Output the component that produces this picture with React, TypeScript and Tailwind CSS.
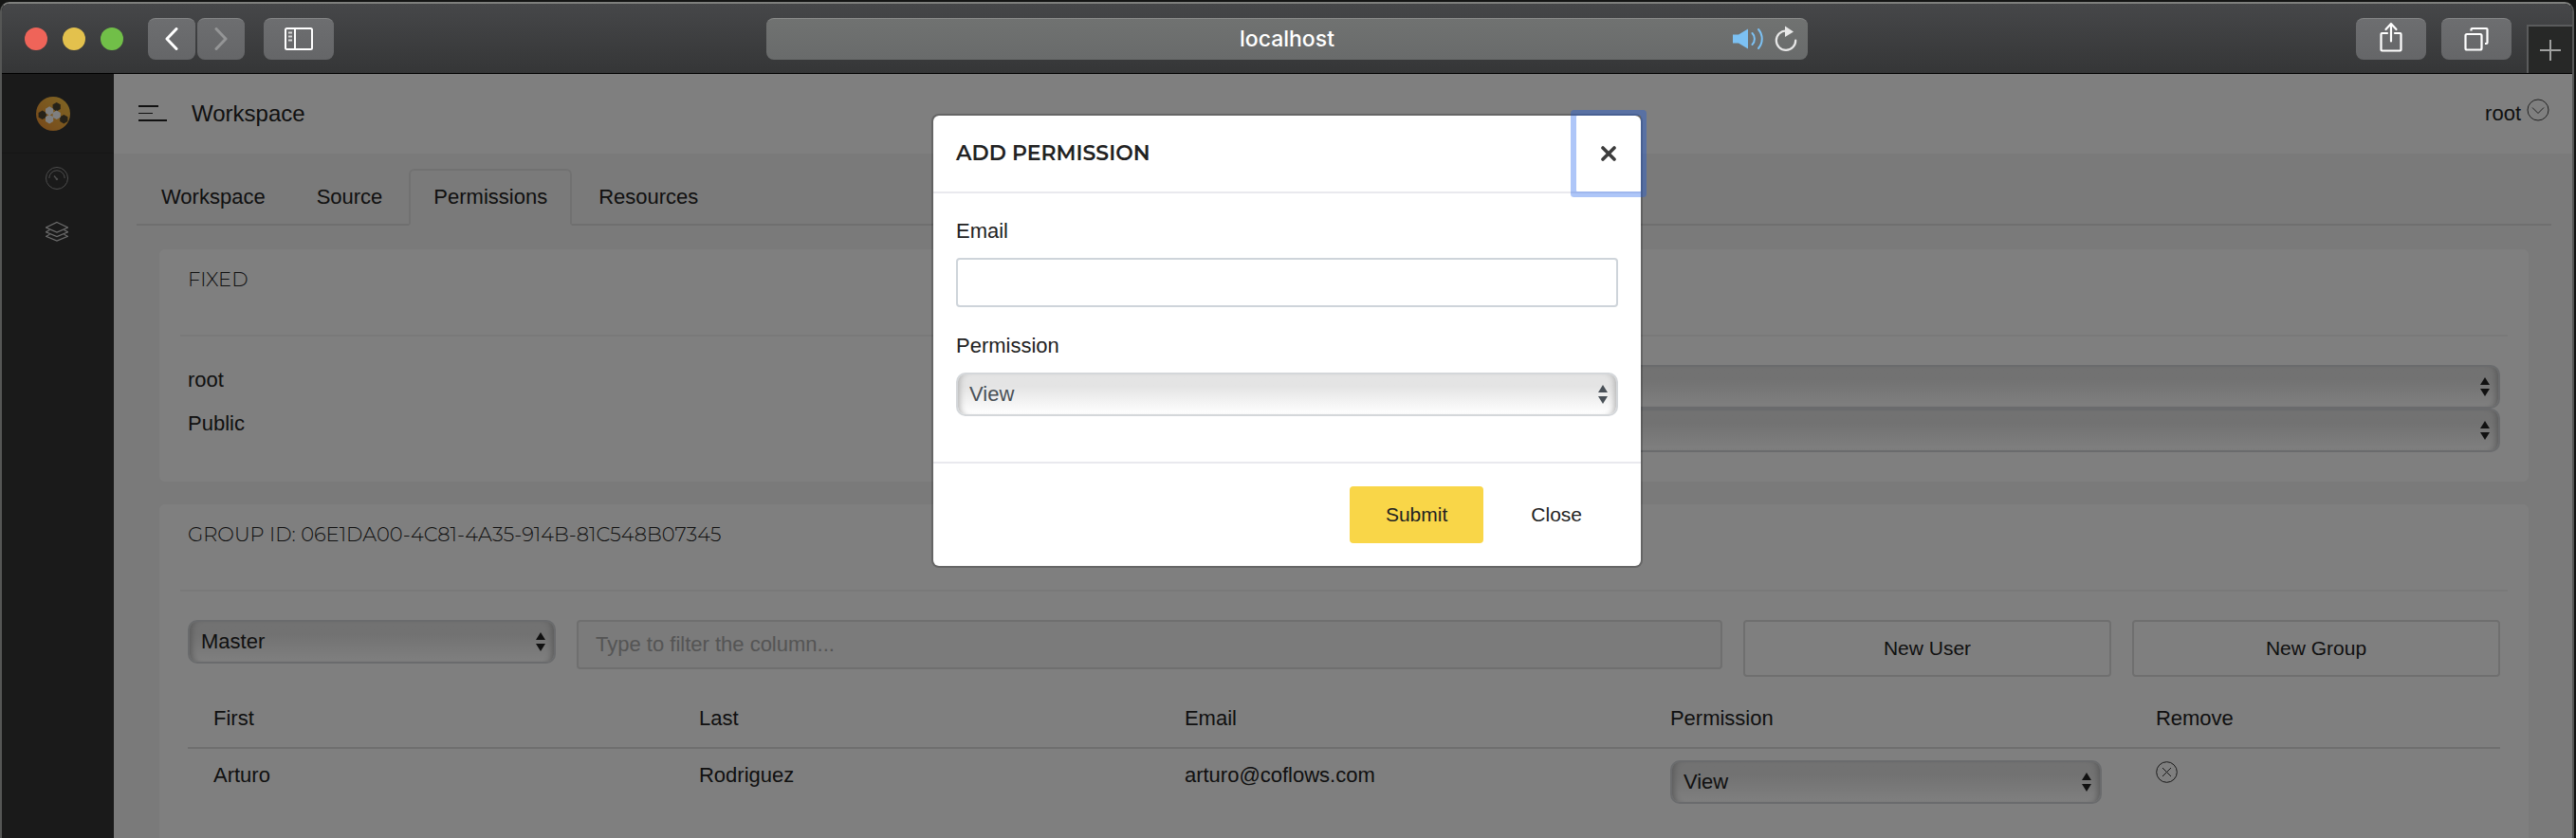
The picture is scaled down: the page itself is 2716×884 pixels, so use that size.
import React from "react";

const toolButton =
  "flex h-11 items-center justify-center rounded-lg border-t border-[#858687] bg-linear-to-b from-[#6d6e70] to-[#656668] text-white";

function SortArrows() {
  return (
    <svg className="pointer-events-none absolute right-2.5 top-3" width="12" height="22" viewBox="0 0 12 22" fill="currentColor">
      <path d="M6 1 11 9H1Z" />
      <path d="M6 21 11 13H1Z" />
    </svg>
  );
}

type PickerProps = {
  id?: string;
  label?: string;
  options: string[];
  className?: string;
};

function Picker({ id, label, options, className = "text-[#222]" }: PickerProps) {
  return (
    <div className={`relative h-[46px] w-full ${className}`}>
      <select
        id={id}
        aria-label={label}
        className="h-full w-full appearance-none rounded-[10px] border-2 border-[#d4d7da] bg-linear-to-b from-[#e4e4e4] from-30% to-white px-3 text-[22px] leading-6 shadow-[inset_7px_0_6px_-5px_#b4b4b4,inset_-7px_0_6px_-5px_#b4b4b4] outline-none"
      >
        {options.map((option) => (
          <option key={option}>{option}</option>
        ))}
      </select>
      <SortArrows />
    </div>
  );
}

function BrowserBar() {
  return (
    <header className="grid h-[74px] grid-cols-[1fr_40.5%_1fr] items-center rounded-t-lg border-b border-black bg-linear-to-b from-[#464749] to-[#353637]">
      <div className="flex items-center pl-6">
        <div className="flex gap-4">
          <span className="size-6 rounded-full bg-[#ef6459]" />
          <span className="size-6 rounded-full bg-[#e3c14d]" />
          <span className="size-6 rounded-full bg-[#71bf48]" />
        </div>
        <button aria-label="Back" className={`${toolButton} ml-[26px] w-[50px]`}>
          <svg width="16" height="24" viewBox="0 0 16 24" fill="none" stroke="currentColor" strokeWidth="3" strokeLinecap="round" strokeLinejoin="round">
            <path d="M13 1.500 3 12l10 10.500" />
          </svg>
        </button>
        <button aria-label="Forward" className={`${toolButton} ml-[2px] w-[50px]`}>
          <svg width="16" height="24" viewBox="0 0 16 24" fill="none" stroke="#949596" strokeWidth="3" strokeLinecap="round" strokeLinejoin="round">
            <path d="M3 1.500 13 12 3 22.500" />
          </svg>
        </button>
        <button aria-label="Show sidebar" className={`${toolButton} ml-5 w-[74px]`}>
          <svg width="30" height="24" viewBox="0 0 30 24" fill="none" stroke="currentColor" strokeWidth="2">
            <rect x="1" y="1" width="28" height="22" rx="1.500" />
            <path d="M11 1v22" />
            <path d="M4 5.500h4M4 9.500h4M4 13.500h4" stroke="#d6d6d6" />
          </svg>
        </button>
      </div>

      <div className="grid h-11 grid-cols-[1fr_auto_1fr] items-center rounded-lg border-t border-[#8b8c8b] bg-linear-to-b from-[#707271] to-[#696b6b] px-2.5">
        <span />
        <span className="font-['Inter',sans-serif] text-[23px] font-medium leading-7 text-white">localhost</span>
        <div className="flex items-center justify-end gap-2.5">
          <button aria-label="Mute tab">
            <svg width="34" height="24" viewBox="0 0 34 24" fill="none" stroke="#7cc1f3" strokeWidth="2" strokeLinecap="round">
              <path d="M1 7.500h6L17 1.500v21L7 16.500H1Z" fill="#7cc1f3" stroke="none" />
              <path d="M21.500 6c3.200 3 3.200 9 0 12M28 2c5 6 5 14 0 20" />
            </svg>
          </button>
          <button aria-label="Reload">
            <svg width="26" height="28" viewBox="0 0 26 28" fill="none" stroke="#e8e8e8" strokeWidth="2.200" strokeLinecap="round">
              <path d="M13 5.500A10.200 10.200 0 1 0 23.200 15.500" />
              <path d="M12 0.500 21 6.500 12 12Z" fill="#e8e8e8" stroke="none" />
            </svg>
          </button>
        </div>
      </div>

      <div className="flex h-full items-center justify-end gap-4">
        <button aria-label="Share" className={`${toolButton} w-[74px]`}>
          <svg className="mb-1" width="24" height="32" viewBox="0 0 24 32" fill="none" stroke="currentColor" strokeWidth="2.200" strokeLinejoin="round" strokeLinecap="round">
            <path d="M8 12H2.500A1 1 0 0 0 1.500 13v16.500a1 1 0 0 0 1 1h19a1 1 0 0 0 1-1V13a1 1 0 0 0-1-1H16" />
            <path d="M12 20.500V2M6.500 8 12 2l5.500 6" />
          </svg>
        </button>
        <button aria-label="Show all tabs" className={`${toolButton} w-[74px]`}>
          <svg width="26" height="26" viewBox="0 0 26 26" fill="none" stroke="currentColor" strokeWidth="2.200" strokeLinejoin="round">
            <rect x="1.500" y="8" width="17" height="16.500" rx="1.500" />
            <path d="M7.500 4.500V3a1 1 0 0 1 1-1H23.500a1 1 0 0 1 1 1v14a1 1 0 0 1-1 1H22" />
          </svg>
        </button>
        <button aria-label="New tab" className="flex h-[51px] w-12 items-center justify-center self-end border-l-2 border-t-2 border-[#5a5b5c] bg-[#272827]">
          <svg width="22" height="22" viewBox="0 0 22 22" stroke="#a0a1a0" strokeWidth="2">
            <path d="M11 0v22M0 11h22" />
          </svg>
        </button>
      </div>
    </header>
  );
}

function Logo() {
  const hexagon = "M0-4.700 4.100-2.350V2.350L0 4.700-4.100 2.350V-2.350Z";
  return (
    <svg width="36" height="36" viewBox="0 0 36 36">
      <defs>
        <linearGradient id="gold" x1="1" y1="0" x2="0" y2="1">
          <stop offset="0" stopColor="#ffcc48" />
          <stop offset="1" stopColor="#ee9034" />
        </linearGradient>
      </defs>
      <circle cx="18" cy="18" r="18" fill="url(#gold)" />
      <g fill="#4c4430">
        <path d={hexagon} transform="translate(21.700 10.700)" />
        <path d={hexagon} transform="translate(6.700 19.300)" />
        <path d={hexagon} transform="translate(29.300 23.700)" />
      </g>
      <g fill="#fff">
        <path d={hexagon} transform="translate(14.100 15)" />
        <path d={hexagon} transform="translate(21.700 19.300)" />
        <path d={hexagon} transform="translate(14.100 23.700)" />
      </g>
    </svg>
  );
}

function Sidebar() {
  return (
    <aside className="w-[118px] shrink-0 bg-[#343434]">
      <a href="#home" aria-label="Home" className="flex h-[84px] items-center border-b border-[#2c2c2c] pl-9">
        <Logo />
      </a>
      <nav className="flex flex-col gap-8 pl-[46px] pt-3.5">
        <a href="#dashboard" aria-label="Dashboard">
          <svg width="24" height="24" viewBox="0 0 24 24" fill="none" stroke="#9a9a9a">
            <circle cx="12" cy="12" r="11.500" />
            <path d="M3.800 12a8.200 8.200 0 0 1 16.400 0" />
            <path d="M9 9.500 12 13" strokeWidth="1.500" />
            <circle cx="12" cy="13" r="0.800" fill="#9a9a9a" />
          </svg>
        </a>
        <a href="#workspaces" aria-label="Workspaces">
          <svg width="24" height="24" viewBox="0 0 24 24" fill="none" stroke="#d8d8d8" strokeWidth="1.200">
            <path d="M12 2.500 23.500 8 12 13 0.500 8Z" />
            <path d="M4.500 10.500 0.500 12.700 12 17.500l11.500-4.800-4-2.200" />
            <path d="M4.500 15.200 0.500 17.300 12 22l11.500-4.700-4-2.100" />
          </svg>
        </a>
      </nav>
    </aside>
  );
}

function Card({ title, className = "", children }: { title: string; className?: string; children: React.ReactNode }) {
  return (
    <section className={`rounded-md bg-white px-[22px] pt-5 ${className}`}>
      <h2 className="border-b-2 border-[#f3f3f3] px-2 pb-[46px] font-['Montserrat','Inter',sans-serif] text-[21px] font-light leading-6">{title}</h2>
      <div className="px-2 pt-[30px]">{children}</div>
    </section>
  );
}

const tabs = ["Workspace", "Source", "Permissions", "Resources"];
const columns = ["First", "Last", "Email", "Permission", "Remove"];

function Page() {
  return (
    <div className="flex min-w-0 flex-1 flex-col bg-[#f4f4f4]">
      <div className="flex h-[84px] items-center justify-between bg-white pl-[26px] pr-6">
        <div className="flex items-center gap-[26px]">
          <button aria-label="Toggle menu">
            <svg width="30" height="18" viewBox="0 0 30 18" fill="#222">
              <rect y="0" width="21" height="2" />
              <rect y="8" width="15" height="1" />
              <rect y="15" width="30" height="2" />
            </svg>
          </button>
          <h1 className="text-[24px] leading-8">Workspace</h1>
        </div>
        <button className="flex items-center gap-1.5 text-[22px] leading-8">
          root
          <svg className="mb-2" width="24" height="24" viewBox="0 0 24 24" fill="none" stroke="#444">
            <circle cx="12" cy="12" r="11" />
            <path d="M6 9.500 12 15.500l6-6" />
          </svg>
        </button>
      </div>

      <main className="flex flex-1 flex-col pl-6 pr-[22px] pt-4">
        <div role="tablist" className="flex h-[60px] gap-[2px] border-b-2 border-[#dfdfdf] text-[22px] leading-8">
          {tabs.map((tab) => (
            <button
              key={tab}
              role="tab"
              aria-selected={tab === "Permissions"}
              className="-mb-[2px] rounded-t-md border-2 border-transparent px-6 aria-selected:border-[#e3e3e3] aria-selected:border-b-[#f4f4f4] aria-selected:bg-[#f4f4f4]"
            >
              {tab}
            </button>
          ))}
        </div>

        <div className="flex flex-1 flex-col gap-6 px-6 pt-[25px]">
          <Card title="FIXED" className="pb-[31px]">
            {["root", "Public"].map((name) => (
              <div key={name} className="grid h-[46px] grid-cols-2 items-start">
                <span className="text-[22px] leading-8">{name}</span>
                <Picker label={`${name} permission`} options={["View"]} />
              </div>
            ))}
          </Card>

          <Card title="GROUP ID: 06E1DA00-4C81-4A35-914B-81C548B07345" className="flex-1 rounded-b-none">
            <div className="grid grid-cols-12 items-start gap-x-[22px]">
              <div className="col-span-2">
                <Picker label="Group" options={["Master"]} />
              </div>
              <input
                aria-label="Filter"
                placeholder="Type to filter the column..."
                className="col-span-6 h-[52px] rounded border-2 border-[#dedede] bg-[#f6f6f6] px-[18px] text-[22px] placeholder:text-[#aaa]"
              />
              <button className="col-span-2 h-[60px] rounded border-2 border-[#dedede] text-[21px]">New User</button>
              <button className="col-span-2 h-[60px] rounded border-2 border-[#dedede] text-[21px]">New Group</button>
            </div>

            <table className="mt-3.5 w-full table-fixed text-left text-[22px] leading-8">
              <thead>
                <tr className="border-b-2 border-[#dedede]">
                  {columns.map((column) => (
                    <th key={column} className="w-[21%] py-3.5 pl-[27px] pr-[30px] font-normal last:w-[16%]">
                      {column}
                    </th>
                  ))}
                </tr>
              </thead>
              <tbody>
                <tr className="align-top">
                  <td className="pl-[27px] pr-[30px] pt-3">Arturo</td>
                  <td className="pl-[27px] pr-[30px] pt-3">Rodriguez</td>
                  <td className="pl-[27px] pr-[30px] pt-3">arturo@coflows.com</td>
                  <td className="pl-[27px] pr-[30px] pt-3">
                    <Picker label="Arturo Rodriguez permission" options={["View"]} />
                  </td>
                  <td className="pl-[27px] pr-[30px] pt-3">
                    <button aria-label="Remove Arturo Rodriguez" className="block">
                      <svg width="24" height="24" viewBox="0 0 24 24" fill="none" stroke="#333">
                        <circle cx="11.500" cy="12.500" r="10.800" />
                        <path d="M7 8l9 9M16 8l-9 9" />
                      </svg>
                    </button>
                  </td>
                </tr>
              </tbody>
            </table>
          </Card>
        </div>
      </main>
    </div>
  );
}

function AddPermissionDialog() {
  return (
    <div className="absolute inset-0 flex items-start justify-center bg-black/50 pt-[42px]">
      <form role="dialog" aria-labelledby="dialog-title" className="w-[750px] rounded-lg border-2 border-black/20 bg-white bg-clip-padding">
        <div className="flex h-[82px] items-stretch justify-between border-b-2 border-[#e9e9ee] pl-6">
          <h2 id="dialog-title" className="self-center font-['Montserrat','Inter',sans-serif] text-[22px] font-semibold leading-8">
            ADD PERMISSION
          </h2>
          <button type="button" aria-label="Close dialog" className="flex w-[68px] items-center justify-center rounded-[1px] shadow-[0_0_0_6px_rgba(17,87,235,0.34)]">
            <svg width="16" height="16" viewBox="0 0 16 16" stroke="#3c3c3c" strokeWidth="3.600" strokeLinecap="round">
              <path d="M2 2l12 12M14 2 2 14" />
            </svg>
          </button>
        </div>
        <div className="flex flex-col gap-[29px] px-6 pb-12 pt-7 text-[22px] leading-6">
          <div className="flex flex-col gap-4">
            <label htmlFor="email">Email</label>
            <input id="email" type="email" className="h-[52px] w-full rounded border-2 border-[#ced4da] px-4 outline-none" />
          </div>
          <div className="flex flex-col gap-4">
            <label htmlFor="permission">Permission</label>
            <Picker id="permission" options={["View"]} className="text-[#495057]" />
          </div>
        </div>
        <div className="flex justify-end gap-3 border-t-2 border-[#e9e9ee] p-6 text-[21px]">
          <button type="submit" className="h-[60px] rounded bg-[#f9d648] px-[38px]">Submit</button>
          <button type="button" className="h-[60px] px-[38px]">Close</button>
        </div>
      </form>
    </div>
  );
}

export default function App() {
  return (
    <div className="flex min-h-screen flex-col bg-[#141514] pr-[2px] pt-[2px] font-['Liberation_Sans',Arial,sans-serif] text-[#222]">
      <div className="flex flex-1 flex-col rounded-t-[10px] border-x-2 border-t-2 border-x-[#555655] border-t-[#7e7f7d]">
        <BrowserBar />
        <div className="relative flex flex-1">
          <Sidebar />
          <Page />
          <AddPermissionDialog />
        </div>
      </div>
    </div>
  );
}
